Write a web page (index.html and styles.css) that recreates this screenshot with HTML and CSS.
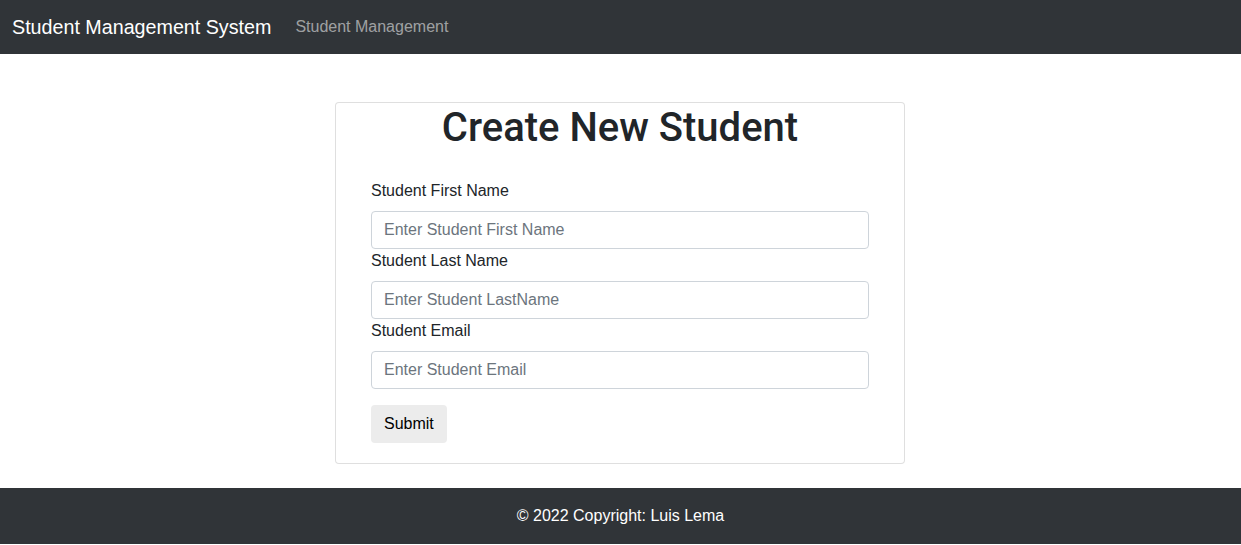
FILE: index.html
```html
<!DOCTYPE html>
<html lang="en">
<head>
<meta charset="utf-8">
<title>Student Management System</title>
<link rel="stylesheet" href="styles.css">
</head>
<body>
<header class="navbar">
  <a class="brand" href="#">Student Management System</a>
  <nav class="nav">
    <a class="nav-link" href="#">Student Management</a>
  </nav>
</header>
<main class="container">
  <div class="card">
    <h2 class="card-title">Create New Student</h2>
    <form class="card-body">
      <div class="form-group">
        <label class="label">Student First Name</label>
        <input class="input" type="text" placeholder="Enter Student First Name">
      </div>
      <div class="form-group">
        <label class="label">Student Last Name</label>
        <input class="input" type="text" placeholder="Enter Student LastName">
      </div>
      <div class="form-group">
        <label class="label">Student Email</label>
        <input class="input" type="text" placeholder="Enter Student Email">
      </div>
      <button class="btn" type="button">Submit</button>
    </form>
  </div>
</main>
<footer class="footer">© 2022 Copyright: Luis Lema</footer>
</body>
</html>
```

FILE: styles.css
```css
* { box-sizing: border-box; }
html, body { margin: 0; padding: 0; }
body {
  font-family: "Liberation Sans", Arial, sans-serif;
  font-size: 16px;
  line-height: 1.5;
  color: #212529;
  background: #fff;
}
.navbar {
  height: 54px;
  background: #303438;
  display: flex;
  align-items: center;
  padding: 0 12px;
}
.brand {
  color: #fff;
  font-size: 19.7px;
  text-decoration: none;
  margin-right: 16px;
  line-height: 30px;
}
.nav { display: flex; }
.nav-link {
  color: rgba(255,255,255,.55);
  text-decoration: none;
  padding: 0 8px;
  font-size: 16px;
}
.container {
  display: flex;
  justify-content: center;
  padding: 48px 1px 24px 0;
}
.card {
  width: 570px;
  border: 1px solid rgba(0,0,0,.125);
  border-radius: 4px;
  background: #fff;
}
.card-title {
  margin: 0 0 8px;
  text-align: center;
  font-family: Roboto, "Liberation Sans", sans-serif;
  font-size: 40px;
  font-weight: 500;
  line-height: 48px;
  padding-top: 1px;
}
.card-body {
  padding: 19px 35px 20px;
}
.form-group { display: flex; flex-direction: column; }
.label {
  display: block;
  margin-bottom: 8px;
  line-height: 24px;
}
.input {
  display: block;
  width: 100%;
  height: 38px;
  padding: 6px 12px;
  font: inherit;
  color: #212529;
  border: 1px solid #ced4da;
  border-radius: 4px;
  background: #fff;
}
.input::placeholder { color: #6c757d; opacity: 1; }
.btn {
  margin-top: 16px;
  height: 38px;
  padding: 6px 13px;
  font: inherit;
  color: #000;
  background: #ececec;
  border: none;
  border-radius: 4px;
}
.footer {
  background: #303438;
  color: #fff;
  text-align: center;
  padding: 16px 0;
  line-height: 24px;
}
```
